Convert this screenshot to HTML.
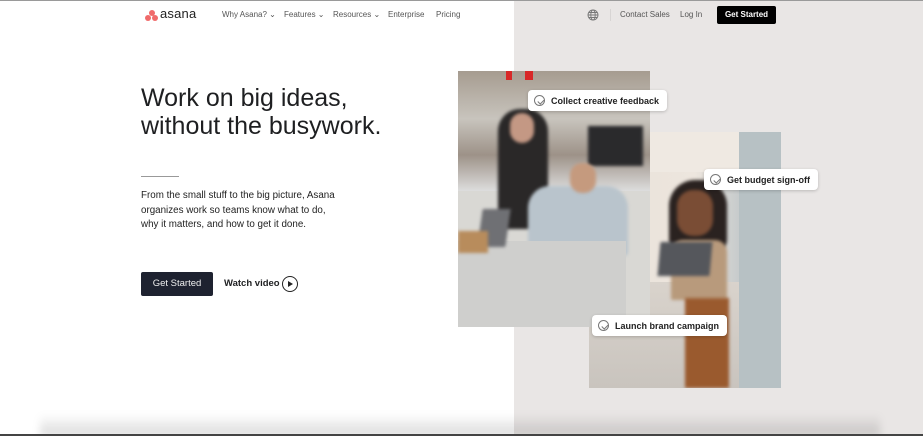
<!DOCTYPE html>
<html><head><meta charset="utf-8"><style>
*{margin:0;padding:0;box-sizing:border-box}
body{width:923px;height:436px;overflow:hidden;position:relative;background:#fff;font-family:"Liberation Sans",sans-serif;color:#151b26}
.abs{position:absolute}
.right{left:514px;top:0;width:409px;height:436px;background:#e9e6e5}
.topline{left:0;top:0;width:923px;height:1px;background:#9a9a9a}
.nav{font-size:8px;color:#555;top:10px}
.tag{background:#fff;border-radius:4px;box-shadow:0 1px 3px rgba(0,0,0,.2);height:21px;font-size:9px;font-weight:bold;color:#222;display:flex;align-items:center;padding:0 8px 0 6px;white-space:nowrap}
.tag i{width:11px;height:11px;border:1px solid #777;border-radius:50%;margin-right:6px;display:inline-block;position:relative}
.tag i:after{content:"";position:absolute;left:3.5px;top:1.5px;width:2.5px;height:5px;border:solid #777;border-width:0 1px 1px 0;transform:rotate(45deg)}
.soft{filter:blur(1.5px)}
</style></head><body>
<div class="abs right"></div>
<div class="abs topline"></div>
<div class="abs" style="left:145px;top:10px;width:13px;height:10px">
<div class="abs" style="left:3.5px;top:0;width:6px;height:6px;border-radius:50%;background:#f06a6a"></div>
<div class="abs" style="left:0;top:5px;width:6px;height:6px;border-radius:50%;background:#f06a6a"></div>
<div class="abs" style="left:7px;top:5px;width:6px;height:6px;border-radius:50%;background:#f06a6a"></div>
</div>
<div class="abs" style="left:160px;top:6px;font-size:13px;color:#222;letter-spacing:.2px">asana</div>
<div class="abs nav" style="left:222px">Why Asana? ⌄</div>
<div class="abs nav" style="left:284px">Features ⌄</div>
<div class="abs nav" style="left:333px">Resources ⌄</div>
<div class="abs nav" style="left:388px">Enterprise</div>
<div class="abs nav" style="left:436px">Pricing</div>
<svg class="abs" style="left:587px;top:9px" width="12" height="12" viewBox="0 0 12 12" fill="none" stroke="#777" stroke-width=".9"><circle cx="6" cy="6" r="5"/><ellipse cx="6" cy="6" rx="2.2" ry="5"/><path d="M1 6h10M2 3.5h8M2 8.5h8"/></svg>
<div class="abs" style="left:610px;top:9px;width:1px;height:12px;background:#d8d5d4"></div>
<div class="abs nav" style="left:620px">Contact Sales</div>
<div class="abs nav" style="left:680px">Log In</div>
<div class="abs" style="left:717px;top:6px;width:59px;height:18px;background:#000;border-radius:2px;color:#fff;font-size:8px;font-weight:bold;text-align:center;line-height:18px">Get Started</div>

<div class="abs" style="left:141px;top:84px;font-size:25px;line-height:28px;color:#1e1f21">Work on big ideas,<br>without the busywork.</div>
<div class="abs" style="left:141px;top:176px;width:38px;height:1px;background:#999"></div>
<div class="abs" style="left:141px;top:189px;font-size:9.8px;line-height:14.5px;color:#222">From the small stuff to the big picture, Asana<br>organizes work so teams know what to do,<br>why it matters, and how to get it done.</div>
<div class="abs" style="left:141px;top:272px;width:72px;height:24px;background:#1e2230;border-radius:2px;color:#eee;font-size:9.5px;text-align:center;line-height:24px">Get Started</div>
<div class="abs" style="left:224px;top:278px;font-size:9.5px;font-weight:bold;color:#1e1f21">Watch video</div>
<div class="abs" style="left:282px;top:276px;width:16px;height:16px;border:1.2px solid #222;border-radius:50%"></div>
<div class="abs" style="left:288px;top:281px;width:0;height:0;border-left:5px solid #222;border-top:3px solid transparent;border-bottom:3px solid transparent"></div>

<div class="abs" style="left:589px;top:132px;width:192px;height:256px;background:linear-gradient(90deg,#e8e0d8 0,#ede6de 55%,#c7cbcc 78%,#b8c0c3 100%);overflow:hidden">
<div class="abs" style="left:0;top:0;width:192px;height:40px;background:#efe9e2"></div>
<div class="abs" style="left:0;top:150px;width:150px;height:106px;background:linear-gradient(#d9d3cc,#c9c4be)"></div>
<div class="abs" style="left:150px;top:0;width:42px;height:256px;background:#b7c1c4"></div>
<div class="abs soft" style="left:80px;top:48px;width:58px;height:70px;background:#2a2220;border-radius:26px 26px 10px 10px"></div>
<div class="abs soft" style="left:88px;top:58px;width:36px;height:46px;background:#7a4d35;border-radius:16px"></div>
<div class="abs soft" style="left:82px;top:108px;width:56px;height:60px;background:#b89a7c;border-radius:12px 12px 2px 2px"></div>
<div class="abs soft" style="left:70px;top:110px;width:52px;height:34px;background:#55575c;transform:skew(-5deg)"></div>
<div class="abs soft" style="left:96px;top:166px;width:44px;height:90px;background:#9a5a2e"></div>
</div>
<div class="abs" style="left:458px;top:71px;width:192px;height:256px;background:#d9d8d4;overflow:hidden">
<div class="abs" style="left:0;top:0;width:192px;height:120px;background:linear-gradient(#a69c90,#c8c4bd 40%,#9d9288 70%,#ddd 100%)"></div>
<div class="abs" style="left:48px;top:0;width:6px;height:9px;background:#d82828"></div>
<div class="abs" style="left:67px;top:0;width:8px;height:9px;background:#d82828"></div>
<div class="abs soft" style="left:130px;top:55px;width:55px;height:40px;background:#2a2a2c"></div>
<div class="abs soft" style="left:40px;top:38px;width:50px;height:120px;background:#2a2828;border-radius:22px 22px 6px 6px"></div>
<div class="abs soft" style="left:52px;top:42px;width:24px;height:30px;background:#c49884;border-radius:12px"></div>
<div class="abs soft" style="left:70px;top:115px;width:100px;height:70px;background:#b9c4cc;border-radius:22px 22px 4px 4px"></div>
<div class="abs soft" style="left:112px;top:92px;width:26px;height:30px;background:#c59a7e;border-radius:12px"></div>
<div class="abs" style="left:0;top:170px;width:168px;height:86px;background:#cfcfcd"></div>
<div class="abs soft" style="left:22px;top:138px;width:28px;height:38px;background:#6f7074;transform:skew(-8deg)"></div>
<div class="abs soft" style="left:0;top:160px;width:30px;height:22px;background:#b88c5c"></div>
</div>
<div class="abs tag" style="left:528px;top:90px"><i></i>Collect creative feedback</div>
<div class="abs tag" style="left:704px;top:169px"><i></i>Get budget sign-off</div>
<div class="abs tag" style="left:592px;top:315px"><i></i>Launch brand campaign</div>

<div class="abs" style="left:40px;top:414px;width:840px;height:22px;background:linear-gradient(rgba(0,0,0,0),rgba(0,0,0,.15));filter:blur(4px)"></div>
<div class="abs" style="left:0;top:434px;width:923px;height:2px;background:#444"></div>
</body></html>
